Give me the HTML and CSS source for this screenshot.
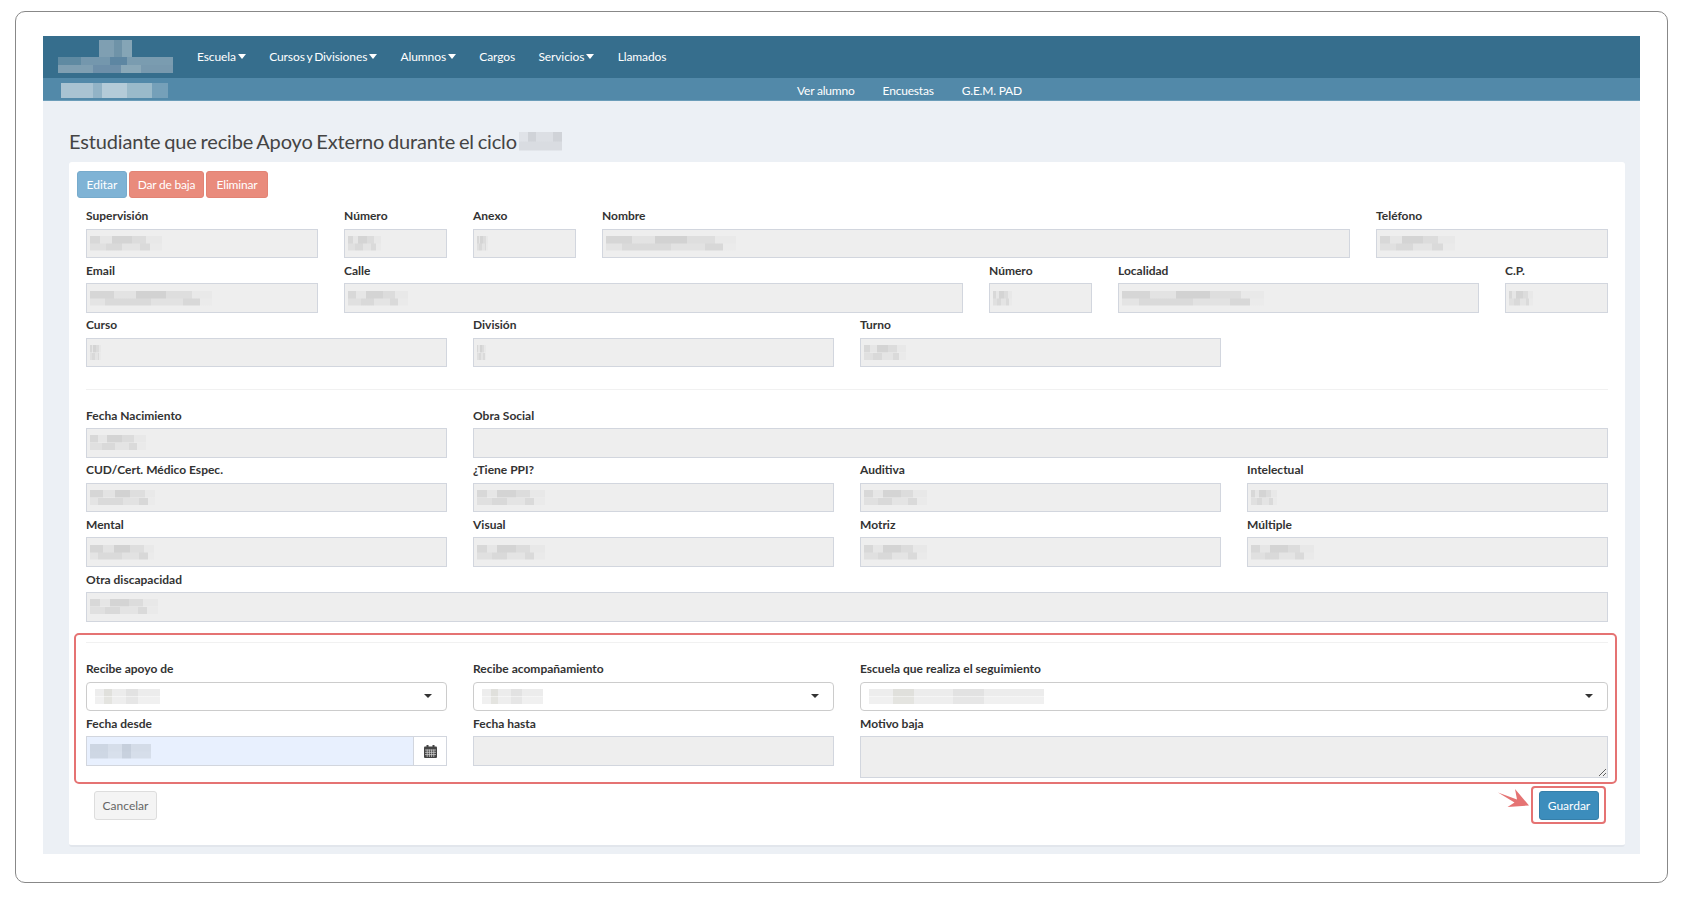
FILE: index.html
```html
<!DOCTYPE html>
<html lang="es">
<head>
    <meta charset="UTF-8">
    <meta name="viewport" content="width=device-width, initial-scale=1.0">
    <title>Apoyo Externo</title>
    <link rel="stylesheet" href="styles.css">
</head>
<body>
    <div class="frame">
        <div class="app">
            <!-- Main nav -->
            <div class="navbar">
                <div class="logo">
                    <span class="logo-top"></span>
                    <span class="logo-bottom"></span>
                </div>
                <a class="nav-link">Escuela<i class="caret"></i></a>
                <a class="nav-link">Cursos y Divisiones<i class="caret"></i></a>
                <a class="nav-link">Alumnos<i class="caret"></i></a>
                <a class="nav-link">Cargos</a>
                <a class="nav-link">Servicios<i class="caret"></i></a>
                <a class="nav-link">Llamados</a>
            </div>
            <div class="subnav">
                <span class="subnav-name"></span>
                <div class="subnav-links">
                    <a>Ver alumno</a>
                    <a>Encuestas</a>
                    <a>G.E.M. PAD</a>
                </div>
            </div>

            <div class="content">
                <h1 class="page-title">Estudiante que recibe Apoyo Externo durante el ciclo<span class="blob blob-title"></span></h1>

                <div class="card">
                    <div class="toolbar">
                        <button class="btn btn-edit">Editar</button>
                        <button class="btn btn-danger btn-baja">Dar de baja</button>
                        <button class="btn btn-danger btn-delete">Eliminar</button>
                    </div>

                    <div class="form-grid">
                        <div class="field c2"><label>Supervisión</label><div class="control"><span class="blob" style="width:72px"></span></div></div>
                        <div class="field c1"><label>Número</label><div class="control"><span class="blob" style="width:33px"></span></div></div>
                        <div class="field c1"><label>Anexo</label><div class="control"><span class="blob" style="width:11px"></span></div></div>
                        <div class="field c6"><label>Nombre</label><div class="control"><span class="blob blob-alt" style="width:130px"></span></div></div>
                        <div class="field c2"><label>Teléfono</label><div class="control"><span class="blob" style="width:75px"></span></div></div>

                        <div class="field c2"><label>Email</label><div class="control"><span class="blob blob-alt" style="width:122px"></span></div></div>
                        <div class="field c5"><label>Calle</label><div class="control"><span class="blob" style="width:60px"></span></div></div>
                        <div class="field c1"><label>Número</label><div class="control"><span class="blob" style="width:19px"></span></div></div>
                        <div class="field c3"><label>Localidad</label><div class="control"><span class="blob blob-alt" style="width:142px"></span></div></div>
                        <div class="field c1"><label>C.P.</label><div class="control"><span class="blob" style="width:24px"></span></div></div>

                        <div class="field c3"><label>Curso</label><div class="control"><span class="blob" style="width:11px"></span></div></div>
                        <div class="field c3"><label>División</label><div class="control"><span class="blob" style="width:9px"></span></div></div>
                        <div class="field c3"><label>Turno</label><div class="control"><span class="blob" style="width:42px"></span></div></div>
                    </div>

                    <hr class="divider">

                    <div class="form-grid">
                        <div class="field c3"><label>Fecha Nacimiento</label><div class="control"><span class="blob" style="width:56px"></span></div></div>
                        <div class="field c9"><label>Obra Social</label><div class="control"></div></div>

                        <div class="field c3"><label>CUD/Cert. Médico Espec.</label><div class="control"><span class="blob blob-alt" style="width:65px"></span></div></div>
                        <div class="field c3"><label>¿Tiene PPI?</label><div class="control"><span class="blob" style="width:68px"></span></div></div>
                        <div class="field c3"><label>Auditiva</label><div class="control"><span class="blob" style="width:63px"></span></div></div>
                        <div class="field c3"><label>Intelectual</label><div class="control"><span class="blob" style="width:26px"></span></div></div>

                        <div class="field c3"><label>Mental</label><div class="control"><span class="blob blob-alt" style="width:64px"></span></div></div>
                        <div class="field c3"><label>Visual</label><div class="control"><span class="blob" style="width:68px"></span></div></div>
                        <div class="field c3"><label>Motriz</label><div class="control"><span class="blob" style="width:63px"></span></div></div>
                        <div class="field c3"><label>Múltiple</label><div class="control"><span class="blob" style="width:63px"></span></div></div>

                        <div class="field c12"><label>Otra discapacidad</label><div class="control"><span class="blob" style="width:68px"></span></div></div>
                    </div>

                    <!-- Highlighted part of the form -->
                    <div class="highlight">
                        <hr class="divider divider-top">
                        <div class="form-grid">
                            <div class="field c3"><label>Recibe apoyo de</label><div class="control select"><span class="blob blob-light" style="width:65px"></span><i class="select-arrow"></i></div></div>
                            <div class="field c3"><label>Recibe acompañamiento</label><div class="control select"><span class="blob blob-light" style="width:61px"></span><i class="select-arrow"></i></div></div>
                            <div class="field c6"><label>Escuela que realiza el seguimiento</label><div class="control select"><span class="blob blob-light" style="width:175px"></span><i class="select-arrow"></i></div></div>

                            <div class="field c3">
                                <label>Fecha desde</label>
                                <div class="input-group">
                                    <div class="control control-date"><span class="blob blob-date" style="width:61px"></span></div>
                                    <span class="addon">
                                        <svg width="13" height="13" viewBox="0 0 13 13">
                                            <rect x="0" y="1.5" width="13" height="11.5" rx="1" fill="#444"/>
                                            <rect x="2.5" y="0" width="2" height="3" fill="#444"/>
                                            <rect x="8.5" y="0" width="2" height="3" fill="#444"/>
                                            <path d="M1 5h11M1 7.3h11M1 9.6h11M3.2 4.5V12M5.4 4.5V12M7.6 4.5V12M9.8 4.5V12" stroke="#ddd" stroke-width=".7" fill="none"/>
                                        </svg>
                                    </span>
                                </div>
                            </div>
                            <div class="field c3"><label>Fecha hasta</label><div class="control"></div></div>
                            <div class="field c6"><label>Motivo baja</label><textarea class="control textarea" disabled></textarea></div>
                        </div>
                    </div>

                    <div class="form-footer">
                        <button class="btn btn-cancel">Cancelar</button>
                        <div class="save-wrap">
                            <svg class="arrow" width="32" height="19" viewBox="0 0 32 19">
                                <path d="M0 3.5L19 10.5L17 0L31 16.5L9.5 18L16.5 13.5Z" fill="#e57373"/>
                            </svg>
                            <button class="btn btn-save">Guardar</button>
                        </div>
                    </div>
                </div>
            </div>
        </div>
    </div>
</body>
</html>
```

FILE: styles.css
```css
/* Page */
* {
    box-sizing: border-box;
}

body {
    margin: 0;
    background: white;
    font-family: Lato, "Noto Sans", sans-serif;
    color: #333;
}

.frame {
    margin: 11px 14px 0 15px;
    height: 872px;
    padding: 24px 27px 0 27px;
    border: 1px solid #888;
    border-radius: 10px;
}

.app {
    height: 818px;
    background: #ecf0f5;
}

/* Nav */
.navbar {
    display: flex;
    align-items: center;
    height: 42px;
    padding-bottom: 2px;
    background: #366e8d;
}

.logo {
    position: relative;
    width: 154px;
    height: 100%;
    flex-shrink: 0;
}

.logo-top {
    position: absolute;
    left: 56px;
    top: 4px;
    width: 33px;
    height: 17px;
    background: linear-gradient(90deg, #7f9fb2 0 45%, #6f93a8 45% 70%, #85a5b6 70%);
}

.logo-bottom {
    position: absolute;
    left: 15px;
    top: 21px;
    width: 115px;
    height: 16px;
    background-image:
        linear-gradient(90deg, #5f8aa2 0 20%, #7497ad 20% 45%, #5d86a2 45% 60%, #7a9cb0 60%),
        linear-gradient(90deg, #7f9fb2 0 30%, #6d8fa9 30% 55%, #8aa8b8 55% 72%, #7899ae 72%);
    background-size: 100% 50%;
    background-position: top, bottom;
    background-repeat: no-repeat;
}

.nav-link {
    display: flex;
    align-items: center;
    margin-right: 23.3px;
    font-size: 12px;
    letter-spacing: -.1px;
    word-spacing: -1px;
    white-space: pre;
    color: white;
}

.caret {
    width: 0;
    height: 0;
    margin-left: 2px;
    border-left: 4px solid transparent;
    border-right: 4px solid transparent;
    border-top: 5px solid white;
}

.subnav {
    display: flex;
    align-items: center;
    height: 23px;
    padding-top: 2px;
    background: #5289a9;
    border-bottom: 1px solid #6b9db9;
}

.subnav-name {
    width: 107px;
    height: 15px;
    margin-left: 18px;
    background: linear-gradient(90deg, #a9c3d2 0 30%, #92b3c6 30% 38%, #b4cbd8 38% 62%, #9abaca 62% 85%, #75a0b9 85%);
}

.subnav-links {
    display: flex;
    gap: 28px;
    margin-left: 629px;
}

.subnav-links a {
    font-size: 12px;
    letter-spacing: -.2px;
    color: white;
}

/* Content */
.content {
    padding: 0 15px 0 26px;
}

.page-title {
    display: flex;
    align-items: center;
    height: 61px;
    margin: 0;
    padding-top: 19px;
    font-size: 20px;
    font-weight: 400;
    letter-spacing: -.15px;
    word-spacing: -1.2px;
    color: #444;
}

.card {
    height: 685px;
    padding: 9px 17px 0;
    background: white;
    border-radius: 3px;
    border-bottom: 2px solid #e2e6ec;
}

.toolbar {
    display: flex;
    gap: 2px;
    margin-left: -9px;
    margin-bottom: 5.5px;
}

.btn {
    height: 27px;
    padding: 0;
    border: 1px solid transparent;
    border-radius: 3px;
    font-family: inherit;
    font-size: 12px;
    color: white;
}

.btn-edit {
    width: 50px;
    background: #7fb3d5;
    border-color: #77abcc;
}

.btn-danger {
    letter-spacing: -.2px;
    background: #e98b7c;
    border-color: #e28374;
}

.btn-baja {
    width: 75px;
}

.btn-delete {
    width: 62px;
}

.btn-cancel {
    width: 63px;
    height: 29px;
    background: #f4f4f4;
    border-color: #ddd;
    color: #666;
}

.btn-save {
    width: 60px;
    height: 29px;
    background: #3c8dbc;
    border-color: #367fa9;
}

/* Form */
.form-grid {
    display: grid;
    grid-template-columns: repeat(12, 1fr);
    column-gap: 26px;
    align-items: start;
}

.c1 { grid-column: span 1; }
.c2 { grid-column: span 2; }
.c3 { grid-column: span 3; }
.c5 { grid-column: span 5; }
.c6 { grid-column: span 6; }
.c9 { grid-column: span 9; }
.c12 { grid-column: span 12; }

.field label {
    display: flex;
    align-items: center;
    height: 25.17px;
    padding-bottom: 1px;
    font-size: 12px;
    font-weight: 700;
    color: #333;
}

.control {
    display: flex;
    align-items: center;
    height: 29.5px;
    padding: 0 3px;
    background: #eee;
    border: 1px solid #d2d6de;
}

.select {
    position: relative;
    padding-left: 8px;
    background: white;
    border-radius: 4px;
    border-color: #ccc;
}

.select-arrow {
    position: absolute;
    right: 14px;
    top: 11px;
    border-left: 4px solid transparent;
    border-right: 4px solid transparent;
    border-top: 4px solid #333;
}

.input-group {
    display: flex;
}

.control-date {
    flex: 1;
    background: #e8f0fe;
    border-right: 0;
}

.addon {
    display: flex;
    align-items: center;
    justify-content: center;
    width: 34px;
    border: 1px solid #d2d6de;
}

.textarea {
    display: block;
    width: 100%;
    height: 42px;
}

.divider {
    height: 1px;
    margin: 22px 0 12.5px;
    background: #f1f1f1;
    border: 0;
}

/* Pixelated values */
.blob {
    display: block;
    height: 15px;
    flex-shrink: 0;
    background-image:
        linear-gradient(90deg, #d8d8d8 0 14%, #e6e6e6 14% 30%, #d4d4d4 30% 58%, #dcdcdc 58% 78%, #e8e8e8 78%),
        linear-gradient(90deg, #e0e0e0 0 22%, #d9d9d9 22% 44%, #e4e4e4 44% 70%, #dadada 70% 84%, #eaeaea 84%);
    background-size: 100% 50%;
    background-position: top, bottom;
    background-repeat: no-repeat;
}

.blob-alt {
    background-image:
        linear-gradient(90deg, #d6d6d6 0 20%, #e3e3e3 20% 38%, #d2d2d2 38% 62%, #dedede 62% 84%, #e9e9e9 84%),
        linear-gradient(90deg, #e4e4e4 0 12%, #dadada 12% 50%, #e2e2e2 50% 76%, #d8d8d8 76% 90%, #ebebeb 90%);
}

.blob-light {
    background-image:
        linear-gradient(90deg, #ededed 0 14%, #e0e0dc 14% 26%, #ececec 26% 48%, #e2e2e2 48% 66%, #ececec 66%),
        linear-gradient(90deg, #f0f0f0 0 14%, #e4e4e0 14% 26%, #eeeeee 26% 48%, #e6e6e6 48% 66%, #f0f0f0 66%);
}

.blob-date {
    background-image:
        linear-gradient(90deg, #cdd6e3 0 30%, #d6deea 30% 52%, #c6cfdc 52% 68%, #d4dce8 68%),
        linear-gradient(90deg, #ced7e4 0 30%, #d8e0ec 30% 52%, #c8d1de 52% 68%, #d6deea 68%);
}

.blob-title {
    width: 43px;
    height: 19px;
    margin-left: 2px;
    background-image:
        linear-gradient(90deg, #e0e3e8 0 20%, #d0d3d8 20% 40%, #dcdfe4 40% 80%, #d0d3d8 80%),
        linear-gradient(90deg, #d9dce1 0 100%);
}

/* Red annotations */
.highlight {
    position: relative;
    margin: 11.5px -17px 0;
    padding: 0 17px;
}

.highlight::after {
    content: "";
    position: absolute;
    left: 5px;
    right: 8px;
    top: 0;
    height: 147px;
    border: 2px solid #e57373;
    border-radius: 5px;
    pointer-events: none;
}

.divider-top {
    margin: 0 0 22.5px;
    transform: translateY(9px);
}

.form-footer {
    display: flex;
    justify-content: space-between;
    margin-top: 13px;
    padding: 0 9px 0 8px;
}

.save-wrap {
    position: relative;
}

.save-wrap::after {
    content: "";
    position: absolute;
    left: -8px;
    right: -7px;
    top: -5px;
    bottom: -4px;
    border: 2px solid #e57373;
    border-radius: 4px;
    pointer-events: none;
}

.arrow {
    position: absolute;
    left: -41px;
    top: -2px;
}
```
